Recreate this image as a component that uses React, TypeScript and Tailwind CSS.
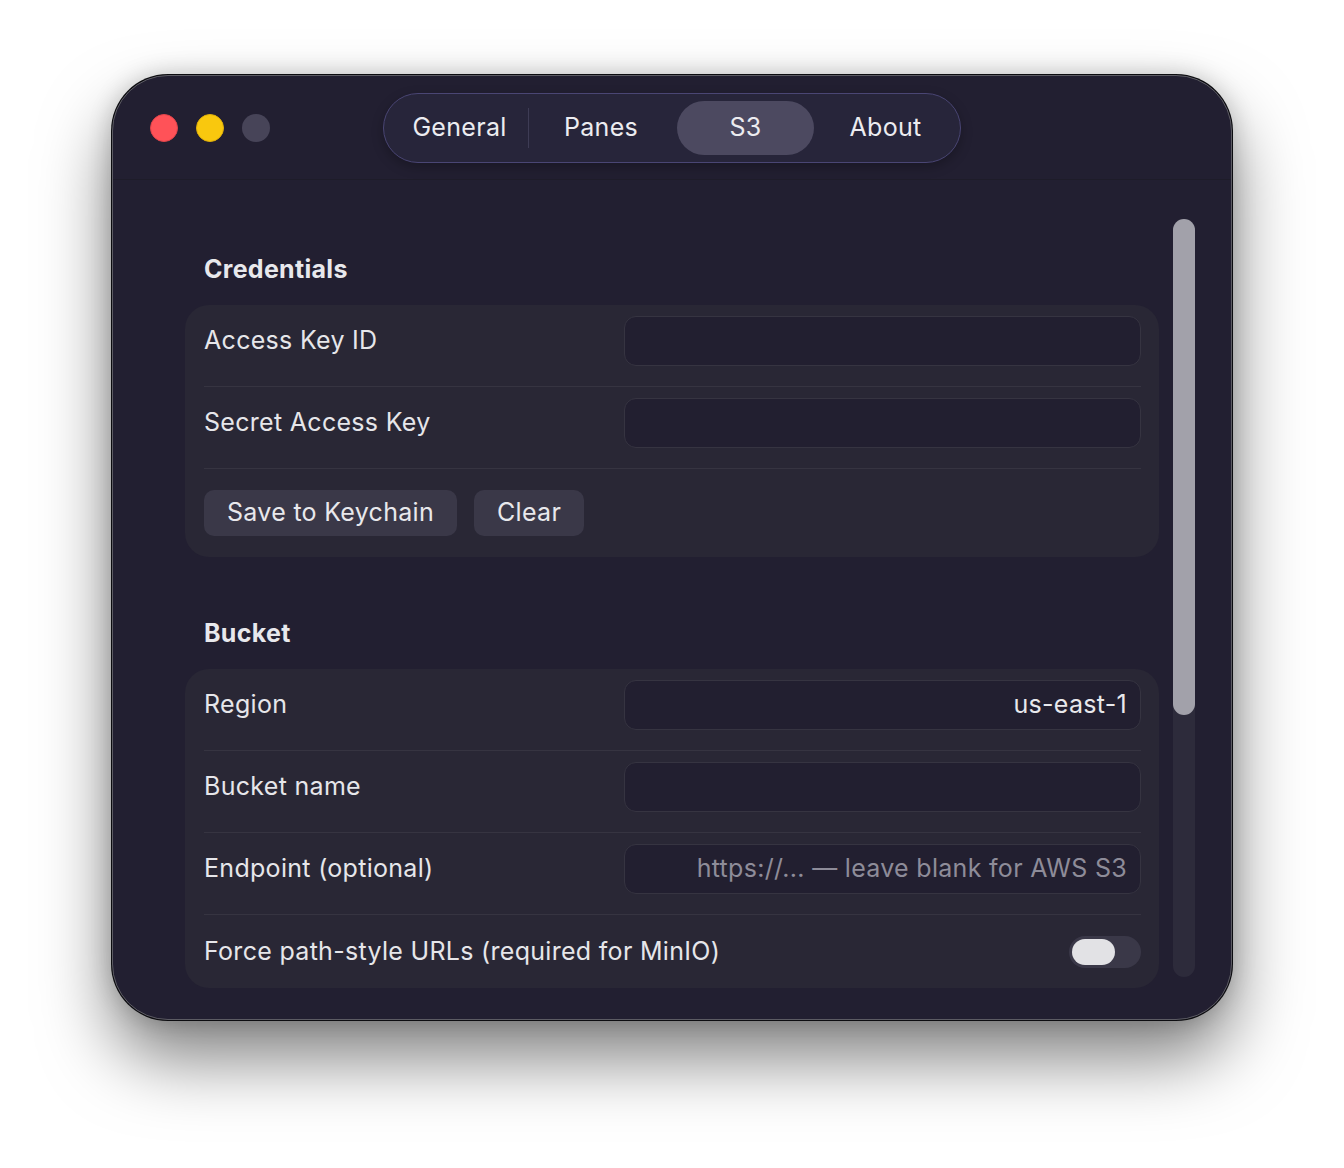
const font = { fontFamily: 'Inter, "Noto Sans", sans-serif' };

function Field({ value, placeholder }: { value?: string; placeholder?: string }) {
  return (
    <div className="flex h-[50px] w-[517px] items-center justify-end rounded-[12px] border border-[#363441] bg-[#221f30] pr-[13px] text-[25px] tracking-[0.3px]">
      {value ? (
        <span className="text-[#e8e8ec]">{value}</span>
      ) : placeholder ? (
        <span className="text-[#8e8c99]">{placeholder}</span>
      ) : null}
    </div>
  );
}

function Row({ label, value, placeholder }: { label: string; value?: string; placeholder?: string }) {
  return (
    <>
      <div className="flex items-center justify-between pt-[11px] pb-[20px]">
        <span className="text-[25px] tracking-[0.3px] text-[#e6e6ea]">{label}</span>
        <Field value={value} placeholder={placeholder} />
      </div>
      <div className="h-px bg-[#363441]" />
    </>
  );
}

function Section({ title, children, first }: { title: string; children: React.ReactNode; first?: boolean }) {
  return (
    <div className={first ? '' : 'mt-[60px]'}>
      <h2 className="pl-[19px] text-[25px] leading-[32px] font-bold tracking-[0.3px] text-[#e8e8ec]">{title}</h2>
      <div className="mt-[20px] rounded-[24px] bg-[#292735] pr-[18px] pl-[19px]">{children}</div>
    </div>
  );
}

export default function App() {
  return (
    <div className="flex h-[1168px] justify-center bg-white pt-[75px]" style={font}>
      <div className="flex h-[945px] w-[1120px] flex-col overflow-hidden rounded-[56px] border border-[#5c5b63] bg-[#221f31] shadow-[0_0_0_1px_#0c0c10,0_38px_70px_rgba(0,0,0,0.5),0_0_24px_rgba(0,0,0,0.2)]">
        {/* title bar */}
        <div className="relative flex h-[104px] shrink-0 items-center border-b border-[#1e1c29]">
          <div className="flex gap-[18px] pl-[37px]">
            <span className="h-[28px] w-[28px] rounded-full border border-[#e0444a] bg-[#ff5258]" />
            <span className="h-[28px] w-[28px] rounded-full border border-[#e0b00a] bg-[#f9c80e]" />
            <span className="h-[28px] w-[28px] rounded-full bg-[#474458]" />
          </div>
          <div className="absolute top-[17px] left-[270px] flex h-[70px] items-center rounded-full border-[1.5px] border-[#4a4674] bg-[#27253a] px-[7px] text-[25px] tracking-[0.3px] text-[#ececf0] shadow-[0_4px_12px_rgba(0,0,0,0.25)]">
            <div className="flex h-[54px] w-[137px] items-center justify-center">General</div>
            <div className="h-[40px] w-px bg-[#3e3c55]" />
            <div className="flex h-[54px] w-[144px] items-center justify-center">Panes</div>
            <div className="ml-[4px] flex h-[54px] w-[137px] items-center justify-center rounded-full bg-[#4c4960]">S3</div>
            <div className="ml-[4px] flex h-[54px] w-[135px] items-center justify-center">About</div>
          </div>
        </div>

        {/* content */}
        <div className="flex min-h-0 flex-1">
          <div className="ml-[72px] w-[974px] shrink-0 pt-[73px]">
            <Section title="Credentials" first>
              <Row label="Access Key ID" />
              <Row label="Secret Access Key" />
              <div className="flex gap-[17px] py-[21px]">
                <button className="h-[46px] rounded-[10px] bg-[#3a3848] px-[23px] text-[25px] tracking-[0.3px] text-[#e8e8ec]">Save to Keychain</button>
                <button className="h-[46px] rounded-[10px] bg-[#3a3848] px-[23px] text-[25px] tracking-[0.3px] text-[#e8e8ec]">Clear</button>
              </div>
            </Section>
            <Section title="Bucket">
              <Row label="Region" value="us-east-1" />
              <Row label="Bucket name" />
              <Row label="Endpoint (optional)" placeholder="https://... — leave blank for AWS S3" />
              <div className="flex h-[73px] items-center justify-between">
                <span className="text-[25px] tracking-[0.3px] text-[#e6e6ea]">Force path-style URLs (required for MinIO)</span>
                <div className="flex h-[32px] w-[72px] items-center rounded-full bg-[#3a3848] px-[3px]">
                  <div className="h-[26px] w-[43px] rounded-full bg-[#e2e2e5]" />
                </div>
              </div>
            </Section>
          </div>
          {/* scrollbar */}
          <div className="mt-[39px] mb-[42px] ml-[14px] w-[22px] rounded-full bg-[#2d2b3b]">
            <div className="h-[496px] rounded-full bg-[#a2a1aa]" />
          </div>
        </div>
      </div>
    </div>
  );
}
